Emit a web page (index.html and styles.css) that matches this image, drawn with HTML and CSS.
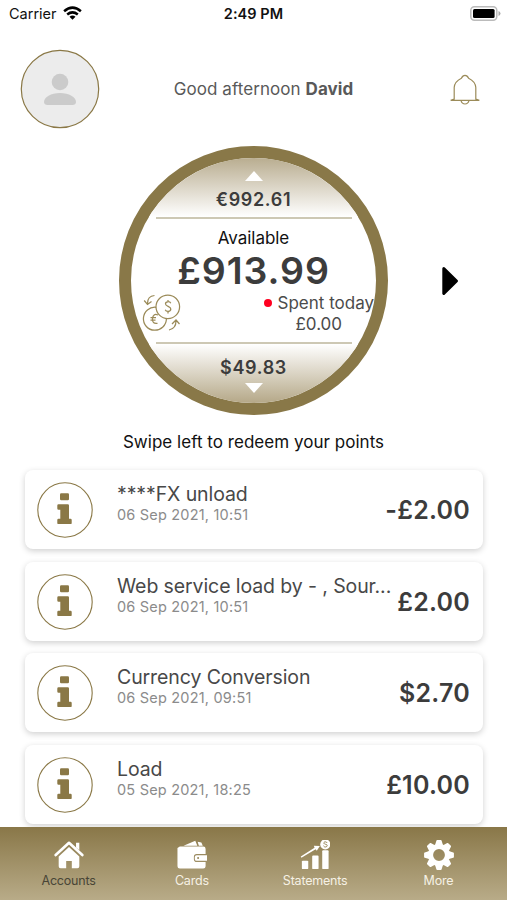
FILE: index.html
```html
<!DOCTYPE html>
<html lang="en">
<head>
<meta charset="utf-8">
<title>Accounts</title>
<link rel="stylesheet" href="styles.css">
</head>
<body>
<svg class="defs" width="0" height="0" aria-hidden="true">
  <symbol id="info" viewBox="0 0 56 56">
    <circle cx="28" cy="28" r="27.2" fill="none" stroke="#8a7846" stroke-width="1.1"/>
    <rect x="23" y="11.3" width="9" height="7" rx="1.2" fill="#8a7846"/>
    <path d="M21.500 22.200H30.800a1.200 1.200 0 0 1 1.200 1.200V36.700h1.500a1.200 1.200 0 0 1 1.200 1.200v3a1.200 1.200 0 0 1-1.200 1.200H21.500a1.200 1.200 0 0 1-1.200-1.200v-3a1.200 1.200 0 0 1 1.200-1.200h1.800v-9h-1.800a1.200 1.200 0 0 1-1.200-1.200v-3.100a1.200 1.200 0 0 1 1.200-1.200z" fill="#8a7846"/>
  </symbol>
</svg>
<main class="app">
  <div class="status">
    <div class="carrier"><span>Carrier</span>
      <svg width="19" height="14" viewBox="0 0 19 14" fill="none" stroke="#000" stroke-width="2.5"><path d="M1.100 5.200Q9.500-1.900 17.900 5.200M4.200 8.500Q9.500 4.200 14.800 8.500"/><path d="M6.500 10.700Q9.500 8.500 12.500 10.700L9.500 13.800z" fill="#000" stroke="none"/></svg>
    </div>
    <div class="clock">2:49 PM</div>
    <svg class="battery" width="31" height="15" viewBox="0 0 31 15"><rect x=".8" y=".8" width="26" height="13.400" rx="3.600" fill="#fff" stroke="#bbb" stroke-width="1.500"/><rect x="3" y="3" width="21.600" height="9" rx="1.500"/><path d="M28.500 5v5q2-.7 2-2.500t-2-2.500" fill="#aaa"/></svg>
  </div>
  <header class="header">
    <svg class="avatar" viewBox="0 0 80 80"><circle cx="40" cy="40" r="38.700" fill="#ececec" stroke="#8a7846" stroke-width="1.200"/><circle cx="40" cy="33" r="8.300" fill="#cbcbcb"/><path d="M24 53c0-5 7-9 16-9s16 4 16 9c0 2-1.500 3-3.500 3H27.500c-2 0-3.500-1-3.500-3z" fill="#cbcbcb"/></svg>
    <div class="greeting">Good afternoon <b>David</b></div>
    <svg class="bell" viewBox="0 0 30 32" fill="none" stroke="#9b8b59" stroke-width="1.200"><path d="M4.200 26V14.500Q4.600 8.500 11.400 5.200Q12.700 2.300 15 2.300t3.600 2.900Q25.400 8.500 25.800 14.500V26L29.300 27.400H.7zM11 27.600Q12 31 15 31t4-3.400"/></svg>
  </header>
  <section class="balance">
    <div class="dial">
      <div class="cap cap-top"><svg width="18" height="10" viewBox="0 0 18 10"><path d="M9 0L18 10H0z" fill="#fff"/></svg><span>€992.61</span></div>
      <div class="line"></div>
      <div class="middle">
        <div class="label">Available</div>
        <div class="amount">£913.99</div>
        <div class="details">
          <svg class="exchange" width="39" height="38" viewBox="-1 0 39 38" fill="none" stroke="#9b8b59" stroke-width="1.250"><path d="M13 13.300A11.500 11.500 0 1 0 23.400 24.800"/><circle cx="24.800" cy="12.800" r="11.800"/><path d="M27.800 9.300C26.800 7 22.300 7.300 22.500 10s5.300 2.100 5.300 5-4.600 3-5.600.7M25 6v2M25 17v2.500M15 21q-5-2-5.500 3.600t5 4.700M7.500 23.700h5.500M7.500 26.200h5M11.500 1.500Q4.500 2 4.500 9.500M1.200 6.500l3.300 4 4-3M26 36Q33 34.500 33 27M29 30l4-4 3.500 4"/></svg>
          <div class="spent"><div><i class="dot"></i>Spent today</div><div class="spent-value">£0.00</div></div>
        </div>
      </div>
      <div class="line"></div>
      <div class="cap cap-bottom"><span>$49.83</span><svg width="18" height="10" viewBox="0 0 18 10"><path d="M0 0H18L9 10z" fill="#fff"/></svg></div>
    </div>
    <svg class="next" width="18" height="30" viewBox="0 0 18 30"><path d="M2.800 2.500L15.500 15 2.800 27.500z" stroke="#000" stroke-width="3" stroke-linejoin="round"/></svg>
  </section>
  <p class="hint">Swipe left to redeem your points</p>
  <section class="list">
    <article class="card"><svg class="info"><use href="#info"/></svg><div class="text"><h2>****FX unload</h2><time>06 Sep 2021, 10:51</time></div><b class="sum">-£2.00</b></article>
    <article class="card"><svg class="info"><use href="#info"/></svg><div class="text"><h2>Web service load by - , Sour...</h2><time>06 Sep 2021, 10:51</time></div><b class="sum">£2.00</b></article>
    <article class="card"><svg class="info"><use href="#info"/></svg><div class="text"><h2>Currency Conversion</h2><time>06 Sep 2021, 09:51</time></div><b class="sum">$2.70</b></article>
    <article class="card"><svg class="info"><use href="#info"/></svg><div class="text"><h2>Load</h2><time>05 Sep 2021, 18:25</time></div><b class="sum">£10.00</b></article>
  </section>
  <nav class="tabs">
    <div class="tab active"><svg viewBox="0 0 32 32" fill="#fff"><path d="M1.800 16L16 3 30.200 16" fill="none" stroke="#fff" stroke-width="2.800" stroke-linecap="round" stroke-linejoin="round"/><path d="M23.500 3h3.500v8l-3.500-3zM16 7.500L27 17.500V28q0 2-2 2h-6v-7.500h-6V30H7q-2 0-2-2V17.500z"/></svg><span>Accounts</span></div>
    <div class="tab"><svg viewBox="0 0 32 32" fill="#fff"><path d="M7 6L19.500.8l2.200 5.200zM22 1.800l4 .8 1.500 3.400H23.300z"/><path d="M3 7H28q2.500 0 2.500 2.500V15H21q-3 0-3 3v2.500q0 3 3 3h9.500V28q0 2.500-2.500 2.500H3Q.5 30.500.5 28V8.500L3 7z"/><path d="M21 16.200h11v6H21q-2 0-2-2v-2q0-2 2-2z"/><circle cx="22.500" cy="19.200" r="1" fill="#91804f"/></svg><span>Cards</span></div>
    <div class="tab"><svg viewBox="0 0 32 32" fill="#fff"><rect x="2" y="22" width="6.800" height="9" rx="1"/><rect x="13" y="16.500" width="6.800" height="14.500" rx="1"/><rect x="23.700" y="11" width="6.800" height="20" rx="1"/><path d="M.8 17.500L15.500 8.200 14.800 6l6.400.3-3.300 5.200-1.200-1.700L1.500 19z"/><circle cx="27" cy="4.700" r="5.400"/><path d="M29 3.200c-1-2-4-1.300-3.500.3s3.500.6 3.500 2.400-3 2.200-4 .3" fill="none" stroke="#91804f" stroke-width="1"/></svg><span>Statements</span></div>
    <div class="tab"><svg class="gear" viewBox="-16 -16 32 32" fill="#fff"><circle r="9" fill="none" stroke="#fff" stroke-width="5.400"/><path id="tooth" d="M-4.300-10.500L-2.800-15.200Q-2.600-15.900-2-15.900H2Q2.600-15.900 2.800-15.200L4.300-10.500z"/><use href="#tooth" transform="rotate(45)"/><use href="#tooth" transform="rotate(90)"/><use href="#tooth" transform="rotate(135)"/><use href="#tooth" transform="rotate(180)"/><use href="#tooth" transform="rotate(225)"/><use href="#tooth" transform="rotate(270)"/><use href="#tooth" transform="rotate(315)"/></svg><span>More</span></div>
  </nav>
</main>
</body>
</html>
```
FILE: styles.css
```css
* { box-sizing: border-box; }
body { margin: 0; background: #fff; font-family: Inter, "Liberation Sans", sans-serif; color: #3c3c3c; }
svg { display: block; flex: none; }
.defs { position: absolute; }
.app { width: 507px; height: 900px; overflow: hidden; display: flex; flex-direction: column; }
.status { height: 28px; flex: none; display: grid; grid-template-columns: 1fr auto 1fr; align-items: center; padding: 0 6px 0 9px; color: #111; font-size: 14.500px; }
.carrier { display: flex; align-items: center; gap: 6px; margin-top: -2px; }
.clock { font-weight: 600; margin: -1px 3px 0 0; letter-spacing: .05px; }
.battery { justify-self: end; margin-top: -2px; }
.header { height: 118px; flex: none; display: grid; grid-template-columns: 80px 1fr 60px; padding: 0 20px; align-items: center; }
.avatar { width: 80px; height: 80px; margin: 4px 0 0 -.5px; }
.greeting { text-align: center; font-size: 17px; letter-spacing: .08px; color: #595959; margin-top: 4px; }
.bell { width: 30px; height: 32px; justify-self: end; margin: 4px 7px 0 0; }
.balance { height: 269px; flex: none; display: grid; grid-template-columns: 1fr 269px 1fr; align-items: center; }
.dial { grid-column: 2; width: 269px; height: 269px; border: 12px solid #897848; border-radius: 50%; display: flex; flex-direction: column; align-items: center; overflow: hidden; }
.cap { align-self: stretch; flex: none; display: flex; flex-direction: column; align-items: center; font-size: 18px; line-height: 22px; font-weight: 600; letter-spacing: .65px; }
.cap-top { height: 59px; padding-top: 13px; gap: 8px; background: linear-gradient(#b9ad90, #fff); }
.cap-bottom { height: 59px; padding-top: 13px; gap: 4px; background: linear-gradient(#fff, #b5a888); }
.line { width: 196px; height: 2px; background: #cdc8b4; flex: none; }
.middle { align-self: stretch; height: 123px; display: flex; flex-direction: column; align-items: center; }
.label { margin-top: 8px; font-size: 17px; line-height: 22px; letter-spacing: -.05px; color: #111; }
.amount { font-size: 37.500px; line-height: 43px; font-weight: 600; letter-spacing: .95px; }
.details { align-self: stretch; display: flex; justify-content: space-between; padding: 1px 2px 0 11px; }
.exchange { margin-top: 1px; }
.spent { font-size: 17px; line-height: 21px; letter-spacing: 0; color: #4b4b4b; white-space: nowrap; }
.dot { display: inline-block; width: 8px; height: 8px; border-radius: 50%; background: #ff0020; margin-right: 6px; vertical-align: 2px; }
.spent-value { text-align: center; }
.next { justify-self: center; margin-left: 5px; }
.hint { margin: 16px 0 17px; text-align: center; font-size: 17px; line-height: 22px; letter-spacing: .03px; color: #111; }
.list { display: flex; flex-direction: column; gap: 12.700px; padding: 0 24px 0 25px; flex: none; height: 357px; }
.card { height: 79px; flex: none; display: flex; padding: 12px 13px 0 12px; background: #fff; border-radius: 8px; box-shadow: 0 2px 6px rgba(0,0,0,.19); }
.info { width: 56px; height: 56px; }
.text { margin-left: 24px; flex: 1; min-width: 0; white-space: nowrap; }
h2 { margin: 0; font-size: 19.500px; line-height: 24px; font-weight: 400; letter-spacing: -.1px; color: #484848; }
time { display: block; font-size: 14.500px; line-height: 18px; letter-spacing: .2px; color: #8b8b8b; }
.sum { font-size: 25px; line-height: 56px; font-weight: 600; letter-spacing: .25px; }
.tabs { position: relative; height: 74px; flex: none; display: grid; grid-template-columns: repeat(4, 123.300px); justify-content: center; padding-top: 13px; background: linear-gradient(#897748, #b9ac89); }
.tab { display: flex; flex-direction: column; align-items: center; gap: 2px; color: #f6f1e5; font-size: 12.500px; line-height: 18px; letter-spacing: -.2px; }
.tab svg { width: 30px; height: 30px; }
.tab .gear { margin-left: 2px; }
.active { color: #494536; }
```
